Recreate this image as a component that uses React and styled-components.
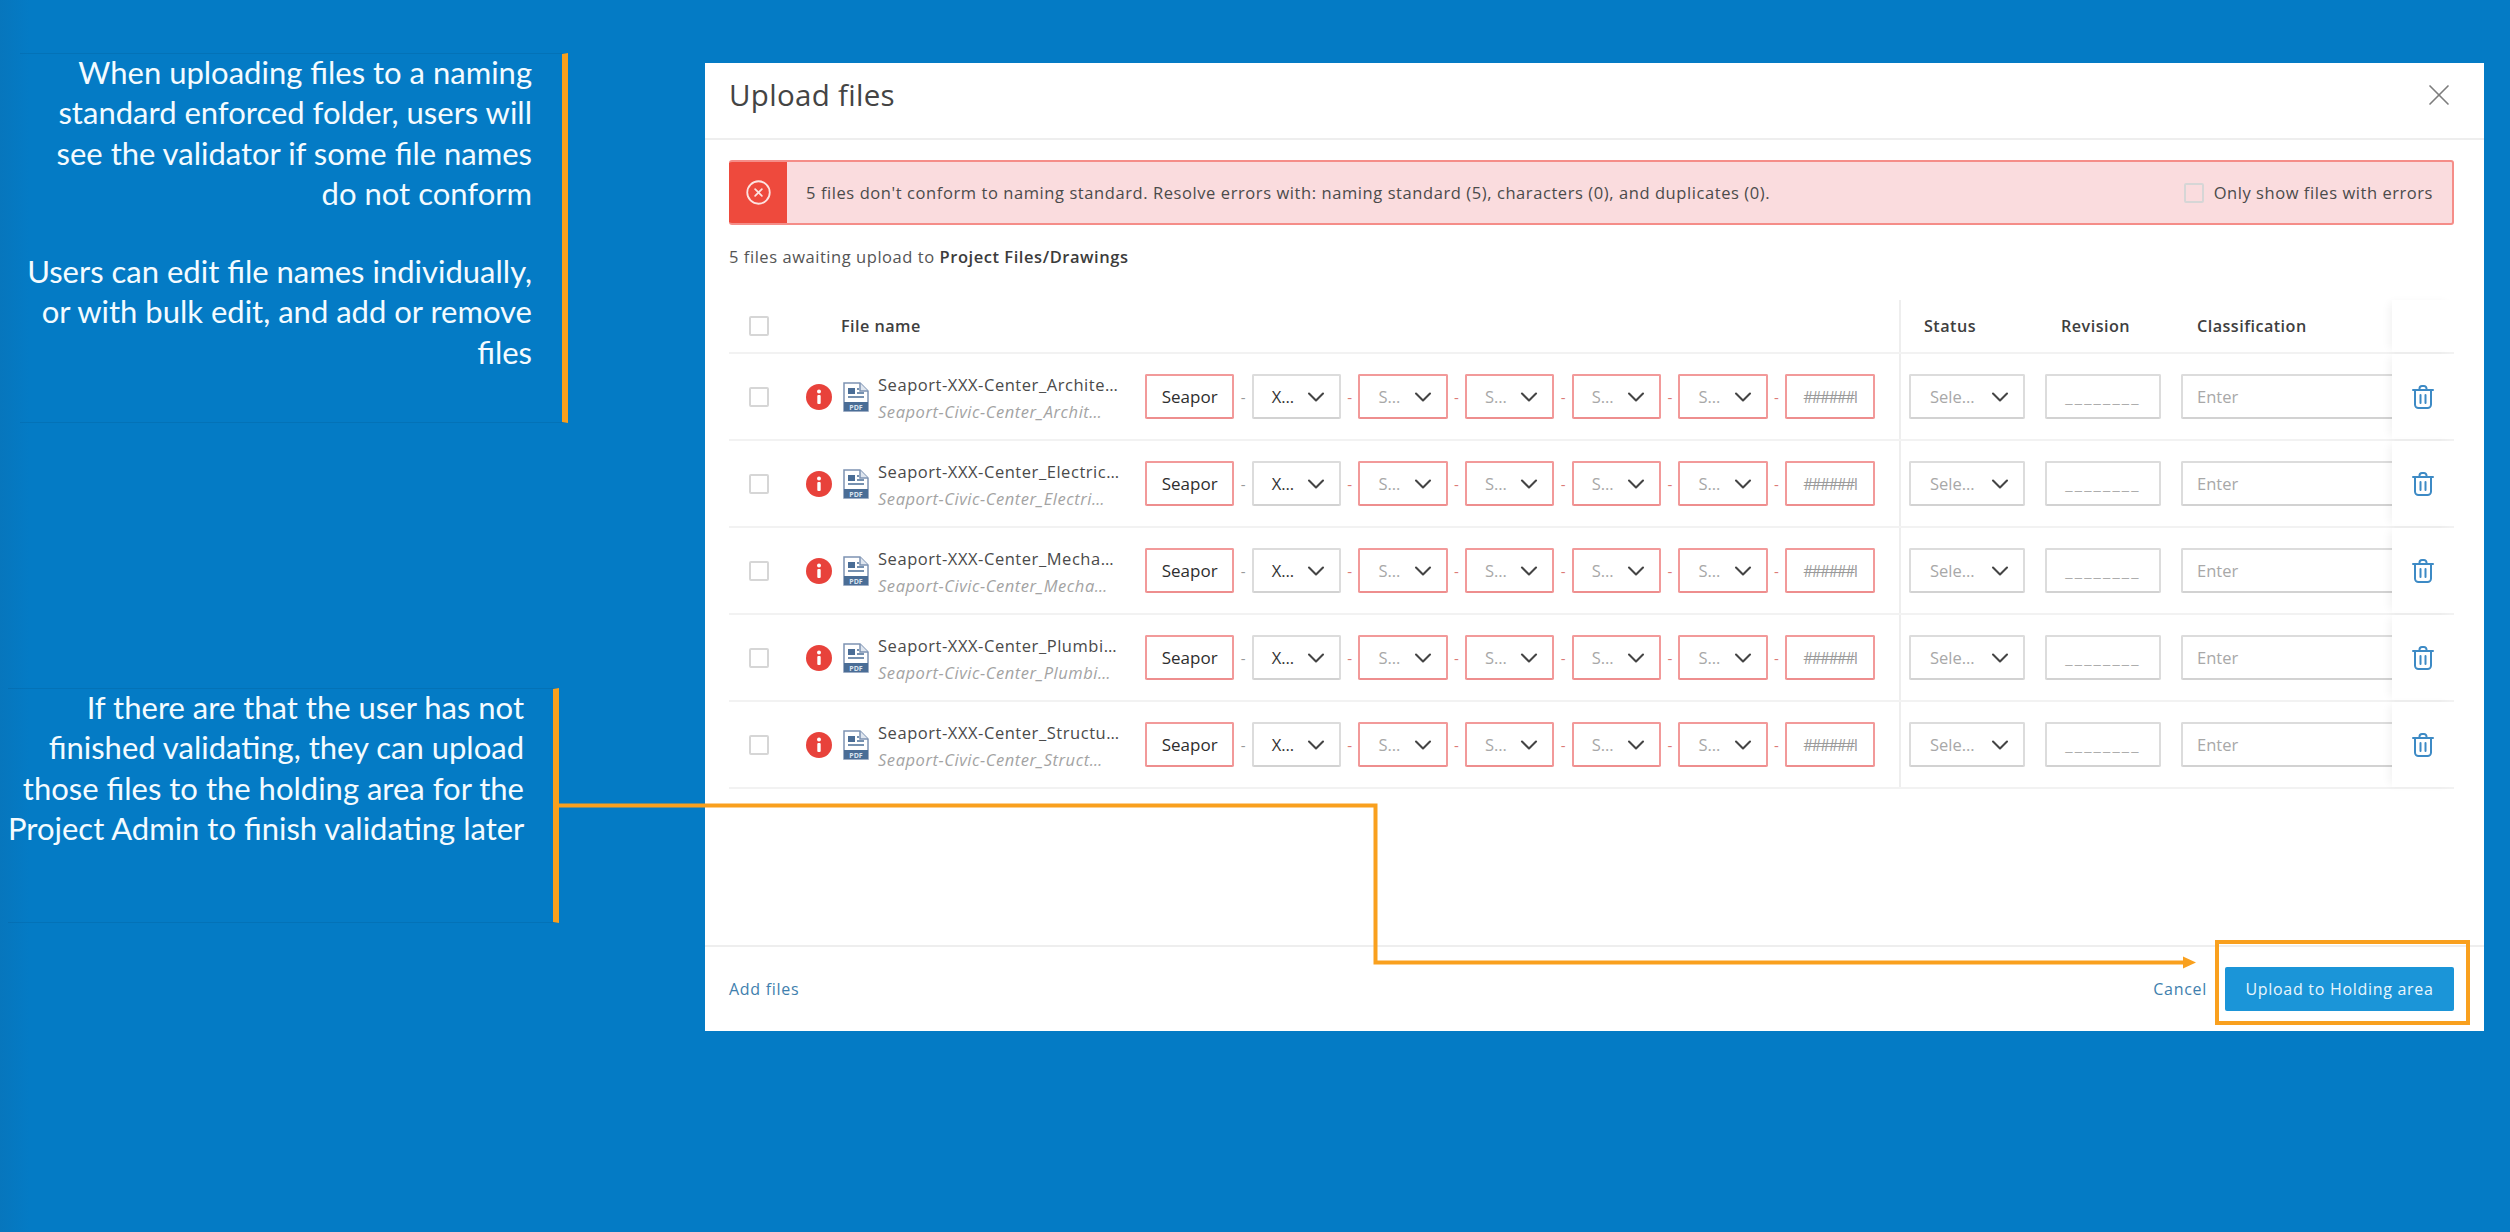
import React from 'react'
import styled, { createGlobalStyle } from 'styled-components'
import { ChevronDown, CircleX, X } from 'lucide-react'

const ORANGE = '#f9a01e'

const GlobalStyle = createGlobalStyle`
  html, body {
    margin: 0;
    padding: 0;
  }
  body {
    font-family: "Open Sans", "Noto Sans", sans-serif;
  }
  * {
    box-sizing: border-box;
  }
`

const Page = styled.div`
  position: relative;
  width: 2510px;
  height: 1232px;
  overflow: hidden;
  display: flex;
  align-items: flex-start;
  background: linear-gradient(90deg, #0776bd 0, #047bc5 30px);
`

const Notes = styled.div`
  width: 705px;
  flex: none;
  padding-top: 53px;
  display: flex;
  flex-direction: column;
  gap: 265px;
`

const Note = styled.div`
  height: ${p => p.$height}px;
  margin: 0 ${p => p.$right}px 0 ${p => p.$left}px;
  padding-right: ${p => p.$pad}px;
  border-right: 6px solid ${ORANGE};
  border-top: 1px solid rgba(0, 40, 70, 0.1);
  border-bottom: 1px solid rgba(0, 40, 70, 0.1);
  color: #f4fbff;
  font-family: Lato, "Open Sans", sans-serif;
  font-size: 31px;
  line-height: 40.3px;
  text-align: right;
`

const NoteText = styled.div`
  margin-top: -2px;
`

const NoteLine = styled.div`
  white-space: nowrap;
  margin-bottom: ${p => (p.$last ? 38 : 0)}px;
`

const Modal = styled.div`
  width: 1779px;
  height: 968px;
  margin-top: 63px;
  flex: none;
  background: #fff;
  display: flex;
  flex-direction: column;
  color: #3c3c3c;
`

const Header = styled.div`
  height: 77px;
  flex: none;
  padding: 0 27px 12px 24px;
  display: flex;
  align-items: center;
  justify-content: space-between;
  border-bottom: 2px solid #eeeeee;
`

const Title = styled.div`
  font-size: 29.5px;
  letter-spacing: 0.3px;
  color: #444;
`

const Close = styled(X)`
  width: 36px;
  height: 36px;
  color: #7d7d7d;
`

const Content = styled.div`
  flex: 1;
  padding: 20px 30px 0 24px;
  display: flex;
  flex-direction: column;
`

const Banner = styled.div`
  height: 65px;
  flex: none;
  display: flex;
  align-items: center;
  background: #fadcde;
  border: 2px solid #f58d88;
  border-left: none;
  border-radius: 3px;
  overflow: hidden;
`

const BannerIcon = styled.div`
  width: 58px;
  height: 65px;
  flex: none;
  background: #ee4a3d;
  display: flex;
  align-items: center;
  justify-content: center;
  color: #fde3e0;
`

const BannerText = styled.div`
  flex: 1;
  padding-left: 19px;
  font-size: 16.5px;
  letter-spacing: 0.58px;
  color: #4b4b4b;
  white-space: nowrap;
`

const BannerOption = styled.div`
  display: flex;
  align-items: center;
  gap: 10px;
  padding-right: 19px;
  font-size: 16.5px;
  letter-spacing: 0.55px;
  color: #4b4b4b;
  white-space: nowrap;
`

const Checkbox = styled.div`
  width: 20px;
  height: 20px;
  flex: none;
  border: 2px solid #d6d6d6;
  border-radius: 2px;
  background: ${p => (p.$clear ? 'transparent' : '#fff')};
`

const Awaiting = styled.div`
  margin-top: 21px;
  height: 22px;
  line-height: 22px;
  font-size: 16.5px;
  letter-spacing: 0.55px;
  color: #555;

  b {
    font-weight: 600;
    color: #3c3c3c;
  }
`

const Table = styled.div`
  margin-top: 32px;
  display: flex;
  flex-direction: column;
`

const Row = styled.div`
  height: ${p => (p.$head ? 54 : 87)}px;
  flex: none;
  display: flex;
  border-bottom: 2px solid #f2f2f2;
`

const FileCell = styled.div`
  width: 1172px;
  flex: none;
  display: flex;
  align-items: center;
  padding-left: 20px;
  border-right: 2px solid #eeeeee;
`

const HeadLabel = styled.div`
  font-size: 16.2px;
  font-weight: 600;
  letter-spacing: 0.45px;
  color: #3f3f3f;
  margin-left: ${p => p.$left || 0}px;
  width: ${p => (p.$width ? `${p.$width}px` : 'auto')};
  flex: none;
`

const MetaCell = styled.div`
  width: 491px;
  flex: none;
  display: flex;
  align-items: center;
  gap: 20px;
  padding-left: 8px;
  overflow: hidden;
`

const MetaHead = styled(MetaCell)`
  padding-left: 23px;
  gap: 0;
`

const ActionCell = styled.div`
  width: 62px;
  flex: none;
  display: flex;
  align-items: center;
  justify-content: center;
  background: #fff;
  box-shadow: -5px 0 9px -3px rgba(0, 0, 0, 0.06);
`

const ErrorIcon = styled.svg`
  width: 26px;
  height: 26px;
  flex: none;
  margin-left: 37px;
`

const PdfIcon = styled.svg`
  width: 26px;
  height: 30px;
  flex: none;
  margin-left: 11px;
`

const FileNames = styled.div`
  width: 267px;
  flex: none;
  margin: 3px 0 0 9px;
  display: flex;
  flex-direction: column;
  gap: 5px;
  white-space: nowrap;
`

const FileName = styled.div`
  font-size: 16.5px;
  line-height: 22px;
  letter-spacing: 0.55px;
  color: ${p => (p.$old ? '#a3a3a3' : '#4a4a4a')};
  font-style: ${p => (p.$old ? 'italic' : 'normal')};
`

const Segments = styled.div`
  display: flex;
  align-items: center;
`

const Box = styled.div`
  width: ${p => p.$width || 89.4}px;
  height: 45px;
  flex: none;
  display: flex;
  align-items: center;
  padding: 0 ${p => (p.$center ? 0 : 14)}px;
  justify-content: ${p => (p.$center ? 'center' : 'flex-start')};
  background: #fff;
  border: 2px solid ${p => (p.$error ? '#f29a9a' : '#dcdcdc')};
  border-bottom-color: ${p => (p.$error ? '#ee8e8e' : '#d2d2d2')};
  border-radius: 2px;
  font-size: 16.5px;
  color: ${p => (p.$muted ? '#a8a8a8' : '#333')};
  white-space: nowrap;
  overflow: hidden;
`

const Seapor = styled.span`
  font-size: 17px;
  color: #2e2e2e;
`

const Hashes = styled.span`
  font-size: 15.5px;
  letter-spacing: -1.6px;
  color: #9a9a9a;
`

const SelectBox = styled(Box)`
  justify-content: space-between;
  padding: 0 9px 0 ${p => p.$pad || 18}px;
`

const Chevron = styled(ChevronDown)`
  width: 28px;
  height: 28px;
  flex: none;
  color: #444;
`

const Dash = styled.div`
  width: 17.3px;
  flex: none;
  text-align: center;
  font-size: 15px;
  color: ${p => (p.$error ? '#dc7a76' : '#999')};
`

const Underscores = styled.div`
  color: #adadad;
  font-size: 16.5px;
  letter-spacing: 2.2px;
`

const WideBox = styled(Box)`
  width: 240px;
`

const Footer = styled.div`
  height: 86px;
  flex: none;
  padding: 0 30px 0 24px;
  display: flex;
  align-items: center;
  justify-content: space-between;
  border-top: 2px solid #eeeeee;
`

const LinkText = styled.span`
  font-size: 16px;
  font-weight: 500;
  letter-spacing: 0.7px;
  color: #3f7fae;
`

const FooterActions = styled.div`
  display: flex;
  align-items: center;
  gap: 18px;
`

const PrimaryButton = styled.div`
  width: 229px;
  height: 44px;
  display: flex;
  align-items: center;
  justify-content: center;
  background: #1b95d8;
  border-radius: 2px;
  color: #e9f6fd;
  font-size: 16px;
  font-weight: 500;
  letter-spacing: 0.7px;
`

const Connector = styled.svg`
  position: absolute;
  left: 0;
  top: 0;
  width: 2510px;
  height: 1232px;
  pointer-events: none;
`

const Highlight = styled.div`
  position: absolute;
  left: 2215px;
  top: 940px;
  width: 255px;
  height: 85px;
  border: 4px solid ${ORANGE};
`

const files = [
  ['Seaport-XXX-Center_Archite…', 'Seaport-Civic-Center_Archit…'],
  ['Seaport-XXX-Center_Electric…', 'Seaport-Civic-Center_Electri…'],
  ['Seaport-XXX-Center_Mecha…', 'Seaport-Civic-Center_Mecha…'],
  ['Seaport-XXX-Center_Plumbi…', 'Seaport-Civic-Center_Plumbi…'],
  ['Seaport-XXX-Center_Structu…', 'Seaport-Civic-Center_Struct…'],
]

const Trash = () => (
  <svg width="22" height="24" viewBox="0 0 22 24" fill="none" stroke="#3d8ac5" strokeWidth="2" strokeLinecap="round">
    <path d="M1 5h20" />
    <path d="M7.5 5V3.5A2.5 2.5 0 0 1 10 1h2a2.5 2.5 0 0 1 2.5 2.5V5" />
    <path d="M3 5v14.5A3.5 3.5 0 0 0 6.5 23h9a3.5 3.5 0 0 0 3.5-3.5V5" />
    <path d="M8.5 10v8M13.5 10v8" />
  </svg>
)

const FileRow = ({ name, original }) => (
  <Row>
    <FileCell>
      <Checkbox />
      <ErrorIcon viewBox="0 0 26 26">
        <circle cx="13" cy="13" r="13" fill="#e8423b" />
        <circle cx="13" cy="7.5" r="2" fill="#fff" />
        <rect x="11.3" y="11" width="3.4" height="9" rx="1" fill="#fff" />
      </ErrorIcon>
      <PdfIcon viewBox="0 0 26 30">
        <path d="M1 1h16l8 8v20H1z" fill="#fff" stroke="#7d93b2" strokeWidth="1.5" />
        <path d="M17 1v8h8" fill="#dfe6ef" stroke="#7d93b2" strokeWidth="1.5" />
        <rect x="5" y="6" width="7" height="6" fill="#4a6d96" />
        <path d="M14 7h2M14 11h7M5 15h16" stroke="#4a6d96" strokeWidth="1.6" />
        <rect x="1" y="20" width="24" height="9" fill="#4a6d96" />
        <text x="13" y="27.5" textAnchor="middle" fontSize="7" fontWeight="700" fill="#dbe4ef" fontFamily="Open Sans, sans-serif">PDF</text>
      </PdfIcon>
      <FileNames>
        <FileName>{name}</FileName>
        <FileName $old>{original}</FileName>
      </FileNames>
      <Segments>
        <Box $error $center><Seapor>Seapor</Seapor></Box>
        <Dash>-</Dash>
        <SelectBox><span>X…</span><Chevron strokeWidth={1.8} /></SelectBox>
        <Dash $error>-</Dash>
        <SelectBox $error $muted><span>S…</span><Chevron strokeWidth={1.8} /></SelectBox>
        <Dash $error>-</Dash>
        <SelectBox $error $muted><span>S…</span><Chevron strokeWidth={1.8} /></SelectBox>
        <Dash $error>-</Dash>
        <SelectBox $error $muted><span>S…</span><Chevron strokeWidth={1.8} /></SelectBox>
        <Dash $error>-</Dash>
        <SelectBox $error $muted><span>S…</span><Chevron strokeWidth={1.8} /></SelectBox>
        <Dash $error>-</Dash>
        <Box $error $muted $center><Hashes>######I</Hashes></Box>
      </Segments>
    </FileCell>
    <MetaCell>
      <SelectBox $width={116} $muted $pad={19}><span>Sele…</span><Chevron strokeWidth={1.8} /></SelectBox>
      <Box $width={116} $center><Underscores>________</Underscores></Box>
      <WideBox $muted>Enter</WideBox>
    </MetaCell>
    <ActionCell><Trash /></ActionCell>
  </Row>
)

const App = () => (
  <Page>
    <GlobalStyle />
    <Notes>
      <Note $height={370} $left={20} $right={137} $pad={30}>
        <NoteText>
          <NoteLine>When uploading files to a naming</NoteLine>
          <NoteLine>standard enforced folder, users will</NoteLine>
          <NoteLine>see the validator if some file names</NoteLine>
          <NoteLine $last>do not conform</NoteLine>
          <NoteLine>Users can edit file names individually,</NoteLine>
          <NoteLine>or with bulk edit, and add or remove</NoteLine>
          <NoteLine>files</NoteLine>
        </NoteText>
      </Note>
      <Note $height={235} $left={8} $right={146} $pad={29}>
        <NoteText>
          <NoteLine>If there are that the user has not</NoteLine>
          <NoteLine>finished validating, they can upload</NoteLine>
          <NoteLine>those files to the holding area for the</NoteLine>
          <NoteLine>Project Admin to finish validating later</NoteLine>
        </NoteText>
      </Note>
    </Notes>

    <Modal>
      <Header>
        <Title>Upload files</Title>
        <Close strokeWidth={1.1} />
      </Header>
      <Content>
        <Banner>
          <BannerIcon><CircleX size={27} strokeWidth={1.6} /></BannerIcon>
          <BannerText>5 files don't conform to naming standard. Resolve errors with: naming standard (5), characters (0), and duplicates (0).</BannerText>
          <BannerOption><Checkbox $clear />Only show files with errors</BannerOption>
        </Banner>
        <Awaiting>5 files awaiting upload to <b>Project Files/Drawings</b></Awaiting>
        <Table>
          <Row $head>
            <FileCell>
              <Checkbox />
              <HeadLabel $left={72}>File name</HeadLabel>
            </FileCell>
            <MetaHead>
              <HeadLabel $width={137}>Status</HeadLabel>
              <HeadLabel $width={136}>Revision</HeadLabel>
              <HeadLabel>Classification</HeadLabel>
            </MetaHead>
            <ActionCell />
          </Row>
          {files.map(([name, original]) => (
            <FileRow key={name} name={name} original={original} />
          ))}
        </Table>
      </Content>
      <Footer>
        <LinkText>Add files</LinkText>
        <FooterActions>
          <LinkText>Cancel</LinkText>
          <PrimaryButton>Upload to Holding area</PrimaryButton>
        </FooterActions>
      </Footer>
    </Modal>

    <Connector viewBox="0 0 2510 1232" fill="none">
      <path d="M556 805.5H1375.5V962.5H2186" stroke={ORANGE} strokeWidth="4" />
      <path d="M2183 956.5L2196 962.5L2183 968.5Z" fill={ORANGE} />
    </Connector>
    <Highlight />
  </Page>
)

export default App
